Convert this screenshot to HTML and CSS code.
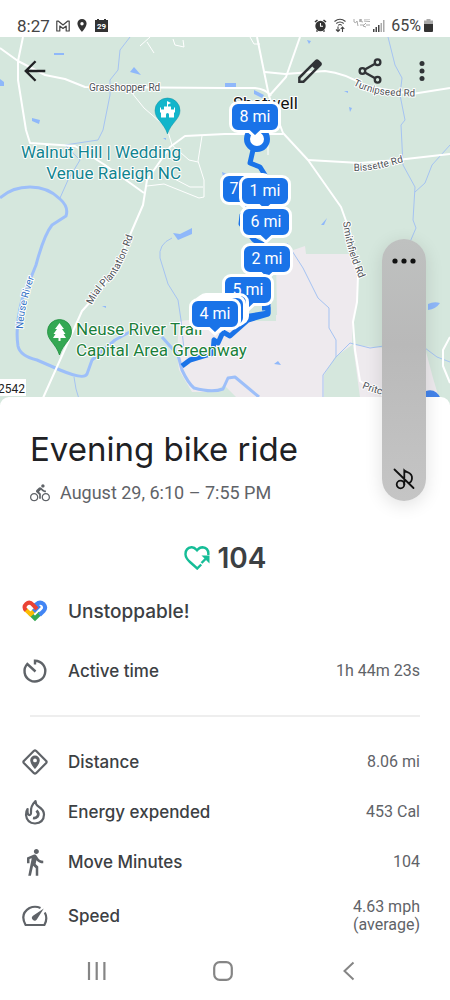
FILE: index.html
```
<!DOCTYPE html>
<html lang="en">
<head>
    <meta charset="UTF-8">
    <meta name="viewport" content="width=device-width, initial-scale=1.0">
    <title>Evening bike ride</title>
    <link rel="stylesheet" href="styles.css">
</head>
<body>

<div class="status-bar">
    <span class="clock">8:27</span>
    <svg class="mail" width="14" height="12" viewBox="0 0 14 12" fill="none" stroke="#444" stroke-width="1.2" stroke-linejoin="round"><path d="M.8 1.2h1.7L7 5l4.500-3.800h1.700v9.800h-3V6L7 8.500 3.800 6v5h-3z"/></svg>
    <svg class="place" width="10" height="13" viewBox="0 0 10 13"><path fill="#333" fill-rule="evenodd" d="M5 0a4.600 4.600 0 0 0-4.600 4.600C.4 8 5 13 5 13s4.600-5 4.600-8.400A4.600 4.600 0 0 0 5 0zm0 3a1.700 1.700 0 1 1 0 3.400A1.700 1.700 0 0 1 5 3z"/></svg>
    <svg class="calendar" width="13" height="13" viewBox="0 0 13 13"><path fill="#333" d="M0 1h2V0h2v1h5V0h2v1h2v12H0z"/><text x="6.500" y="10" text-anchor="middle">29</text></svg>
    <span class="spacer"></span>
    <svg width="13" height="13" viewBox="0 0 13 13"><circle cx="6.500" cy="7" r="5.200" fill="#333"/><path d="M1 3l2.500-2M12 3L9.500 1M2.500 12.500l1-1M10.500 12.500l-1-1" stroke="#333" stroke-width="1.600"/><path d="M6.500 4v3.200H9" fill="none" stroke="#fff" stroke-width="1.100"/></svg>
    <svg class="wifi" width="12" height="15" viewBox="0 0 12 15" fill="none" stroke="#444" stroke-width="1.100"><path d="M.5 3.500q5.500-4.500 11 0M2.300 5.500q3.700-3 7.400 0M4.200 7.300q1.800-1.500 3.600 0"/><path d="M4 8.500v5M2 11.500l2 2 2-2M8.500 14V9M6.700 11l1.800-2 1.800 2"/></svg>
    <svg class="carrier" width="18" height="14" viewBox="0 0 18 14" fill="none" stroke="#aaa" stroke-width="1"><path d="M1 0v3q2 2 3-1l1 5M6 0l3 1-3 1 4 1M7 6h4M11 0h6M11 2l6 .5M13 4l-3 3 3 1M13 6h4"/></svg>
    <svg class="signal" width="12" height="12" viewBox="0 0 12 12"><path fill="#444" d="M0 9h1.500v3H0zM2.500 7H4v5H2.500zM5 5h1.500v7H5z"/><path fill="#aaa" d="M7.500 3H9v9H7.500zM10 0h1.500v12H10z"/></svg>
    <span class="battery-level">65%</span>
    <svg width="9" height="13" viewBox="0 0 9 13"><path fill="#aaa" d="M2.500 0h4v1.500H9V6H0V1.500h2.500z"/><path fill="#333" d="M0 5h9v7a1 1 0 0 1-1 1H1a1 1 0 0 1-1-1z"/></svg>
</div>

<div class="map">
    <svg class="map-canvas" viewBox="0 37 450 368" preserveAspectRatio="xMidYMin slice" role="img" aria-label="Route map">
        <defs>
            <!-- mile marker, tip points at the bottom -->
            <path id="bubble" d="M-17-14.500h34a7.500 7.500 0 0 1 7.500 7.500v14a7.500 7.500 0 0 1-7.500 7.500H6L0 20-6 14.500h-11a7.500 7.500 0 0 1-7.500-7.500v-14a7.500 7.500 0 0 1 7.500-7.500z"/>
            <path id="turnipseed" d="M353 85Q370 94 390 95.500T425 96"/>
            <path id="bissette" d="M354 171Q375 171 400 163L412 160"/>
            <path id="smithfield" d="M343 222Q346 243 350 255T364 290"/>
            <path id="mial" d="M92 305Q98 292 110 281T136 227"/>
            <path id="neuse" d="M23 329Q24 305 35 275L40 262"/>
            <path id="pritchard" d="M362 388Q372 393 400 399"/>
        </defs>

        <rect y="37" width="450" height="368" fill="#d5e7dd"/>
        <path class="town" d="M276 256l29-10 1 8h46l6 21-1 25-4 20-1 25-17 12-11 18v30h-80l-20-20-10 7h-22l-13-22-2-17 2-32 50-5 48-1z"/>
        <path class="town" d="M353 345l32 3 40 0 8 30 8 27h-80z"/>
        <path fill="#d5e7dd" d="M250 297h26v24h-26z"/>

        <g class="stream">
            <path d="M130 37l-10 13-2 20-8 10v15l-7 35-5 10-33 5 15 15-12 20-8 18"/>
            <path d="M172 238q-14 6-12 20l8 26 10 16 3 20 3 30M74 377l2 12 3 10"/>
            <path d="M388 37l7 28 7 13-2 17 5 25-4 5 2 40 12 22-2 33 3 8-6 14M450 145l-18 20-7 18-10 9"/>
            <path d="M287 243l16 25 15 30 11 10v20l7 12v17l-13 18v30M336 357l14-14 20 5 14-2M425 348l12 9 13 5"/>
        </g>
        <path class="river" d="M0 198Q12 187 30 187T60 199Q69 207 66 216L52 225Q44 235 36 265L22 300Q15 327 18 346 20 356 37 360L60 370Q84 380 87 374L92 360 115 340 137 328"/>
        <path class="river" d="M162 337l16 18 4 15q6 13 12 18 18 5 29 1l5-11 7-1 24 20"/>
        <g class="pond">
            <path d="M54 53h10v2H54zM130 72l4-5 7 8zM0 79l4 3v4H0zM32 118l8 2-1 4-7-3zM173 233l7 1 12-6v6l-14 6zM307 40l4 1-2 3zM225 83h11v4h-11zM254 90l10 5-2 3-8-4zM349 107l3 1-2 4zM321 225l6-7-3 7zM222 172l5 2-4 3zM274 364l4-3 3 4zM344 91h4v2zM163 138h3v2zM428 304q6-3 12-1-4 6-12 7zM102 306h4v2z"/>
            <path fill="#4384eb" d="M426 391q10-3 15 8h-15z"/>
        </g>

        <g class="road">
            <path d="M0 48L18 61 45 75 65 79 85 87 225 88H255Q266 89 271 96M23 37L18 61V80L26 130 30 143 75 146 105 165 144 193"/>
            <path d="M43 398L82 311 100 291 117 266 130 235 143 205 147 180 170 147 185 136 225 134H283"/>
            <path d="M257 37l12 59 3 8 11 29 25 27 33 47 9 25 8 43-1 27-4 20 2 28 5 31 25 16M300 37l-14 40-17 19"/>
            <path d="M265 72l20 2 40-3q20 2 40 15l47 8 38-6M308 160l52 3 37-3 53-6M450 337l-7 13v16l7 17"/>
        </g>
        <g class="lane">
            <path d="M132 93l12 15 23 20 5 17 17 15 9 2M202 136l-4 25 6 19v17l-5 1-35-14-17 2M165 174l25 13h13M140 46l20-18M147 42l7 11M173 39l2 6 9 2-1-7M250 37l4 7h6M268 133v22"/>
        </g>

        <g class="road-name">
            <text x="89" y="91">Grasshopper Rd</text>
            <text><textPath href="#turnipseed">Turnipseed Rd</textPath></text>
            <text><textPath href="#bissette">Bissette Rd</textPath></text>
            <text><textPath href="#smithfield">Smithfield Rd</textPath></text>
            <text><textPath href="#mial">Mial Plantation Rd</textPath></text>
            <text class="river-name"><textPath href="#neuse">Neuse River</textPath></text>
            <text><textPath href="#pritchard">Pritc</textPath></text>
        </g>

        <path class="route" d="M253 150L250 163 260 167 265 175 267 192 242 215 241 224 254 240 268 247M262 308H268V314L248 320 230 336 223 332 218 343 214 340 213 353 190 360 182 366"/>
        <path class="route" d="M268 304V313L244 317"/>
        <circle cx="257" cy="139" r="10" fill="#fff" stroke="#1a73e8" stroke-width="6"/>

        <g class="place-name">
            <text class="venue" x="181" y="158" text-anchor="end">Walnut Hill | Wedding</text>
            <text class="venue" x="181" y="179" text-anchor="end">Venue Raleigh NC</text>
            <text class="park" x="76" y="335">Neuse River Trail</text>
            <text class="park" x="76" y="356">Capital Area Greenway</text>
            <text x="233" y="109">Shotwell</text>
        </g>

        <path fill="#12b5cb" stroke="#0e8f9f" stroke-width=".5" d="M167.500 98a12.500 12.500 0 0 0-12.500 12.500c0 9 9 12 12.500 23.500 3.500-11.500 12.500-14.500 12.500-23.500A12.500 12.500 0 0 0 167.500 98z"/>
        <path fill="#fff" d="M167 101l4 2-3 1.500v2h3v3h3v-2h1v5h-1v5h-5v-3a1.500 1.500 0 0 0-3 0v3h-5v-5h-1v-5h1v2h3v-3h3z"/>
        <path fill="#34a853" stroke="#1e8e3e" stroke-width=".8" d="M59.500 319.500a12 12 0 0 0-12 12c0 9 8.500 12 12 23.500 3.500-11.500 12-14.500 12-23.500a12 12 0 0 0-12-12z"/>
        <path fill="#fff" d="M59.500 323l4.500 6h-2l3.500 5h-2l2.500 4h-5.500v3h-2v-3H53l2.500-4h-2l3.500-5h-2z"/>

        <g class="marker" transform="translate(255 117)"><use href="#bubble"/><text y="5">8 mi</text></g>
        <g class="marker" transform="translate(246 189)"><use href="#bubble"/><text x="-12" y="5">7</text></g>
        <g class="marker" transform="translate(265 191)"><use href="#bubble"/><text y="5">1 mi</text></g>
        <g class="marker" transform="translate(266 222)"><use href="#bubble"/><text y="5">6 mi</text></g>
        <g class="marker" transform="translate(267 259)"><use href="#bubble"/><text y="5">2 mi</text></g>
        <g class="marker" transform="translate(248 290)"><use href="#bubble"/><text y="5">5 mi</text></g>
        <g class="marker" transform="translate(223 309)"><use href="#bubble"/></g>
        <g class="marker" transform="translate(220 311)"><use href="#bubble"/></g>
        <g class="marker" transform="translate(215 314)"><use href="#bubble"/><text y="5">4 mi</text></g>

        <path fill="#fff" d="M0 379h26v17H0z"/>
        <text class="route-number" x="-2" y="393">2542</text>
    </svg>

    <div class="toolbar">
        <button type="button" class="icon-button back" aria-label="Back"><svg width="26" height="26" viewBox="0 0 24 24" fill="none" stroke="#202124" stroke-width="2.200"><path d="M21.500 12H4M12.500 3L3.500 12l9 9"/></svg></button>
        <button type="button" class="icon-button" aria-label="Edit"><svg width="30" height="30" viewBox="0 0 24 24"><path fill="#303336" fill-rule="evenodd" d="M2.500 16.800V21.500h4.700L20.900 7.800c.8-.8.800-2 0-2.800l-1.900-1.900c-.8-.8-2-.8-2.800 0zM13.800 8.300l1.900 1.900L6.300 19.500l-1.900.1.100-1.900z"/></svg></button>
        <button type="button" class="icon-button" aria-label="Share"><svg width="28" height="28" viewBox="0 0 24 24" fill="none" stroke="#303336" stroke-width="2"><circle cx="18.500" cy="4.500" r="2.400"/><circle cx="5.500" cy="12" r="2.400"/><circle cx="18.500" cy="19.500" r="2.400"/><path d="M7.600 10.800l8.800-5.100M7.600 13.200l8.800 5.100"/></svg></button>
        <button type="button" class="icon-button more" aria-label="More options"><svg width="24" height="24" viewBox="0 0 24 24" fill="#303336"><circle cx="12" cy="4.500" r="2.500"/><circle cx="12" cy="12" r="2.500"/><circle cx="12" cy="19.500" r="2.500"/></svg></button>
    </div>
</div>

<div class="volume-panel">
    <button type="button" aria-label="Volume options"><svg width="24" height="8" viewBox="0 0 24 8" fill="#111"><circle cx="3" cy="4" r="2.600"/><circle cx="12" cy="4" r="2.600"/><circle cx="21" cy="4" r="2.600"/></svg></button>
    <button type="button" aria-label="Unmute media"><svg width="22" height="22" viewBox="0 0 22 22" fill="none" stroke="#111" stroke-width="1.800" stroke-linecap="round"><circle cx="7.500" cy="16.500" r="3.800"/><path d="M11.300 16.500V2.500q1 1 3.500 1.800 4.500 2 4.200 6-.2 4-3.500 4.800M1.500 1.500l19 18.500"/></svg></button>
</div>

<main class="sheet">
    <h1>Evening bike ride</h1>
    <p class="date">
        <svg width="20" height="20" viewBox="0 0 24 24" fill="#5f6368"><path d="M15.500 5.500c1.100 0 2-.9 2-2s-.9-2-2-2-2 .9-2 2 .9 2 2 2zM5 12c-2.800 0-5 2.200-5 5s2.200 5 5 5 5-2.200 5-5-2.200-5-5-5zm0 8.500c-1.900 0-3.500-1.600-3.500-3.500s1.600-3.500 3.500-3.500 3.500 1.600 3.500 3.500-1.600 3.500-3.500 3.500zm5.800-10l2.400-2.400.8.800c1.300 1.300 3 2.100 5.100 2.100V9c-1.500 0-2.700-.6-3.600-1.500l-1.900-1.900c-.5-.4-1-.6-1.600-.6s-1.100.2-1.400.6L7.800 8.400c-.4.400-.6.900-.6 1.400 0 .6.200 1.100.6 1.400L11 14v5h2v-6.200l-2.200-2.300zM19 12c-2.800 0-5 2.200-5 5s2.200 5 5 5 5-2.200 5-5-2.200-5-5-5zm0 8.500c-1.900 0-3.500-1.600-3.500-3.500s1.600-3.500 3.500-3.500 3.500 1.600 3.500 3.500-1.600 3.500-3.500 3.500z"/></svg>
        August 29, 6:10 – 7:55 PM
    </p>

    <div class="points">
        <svg width="26" height="24" viewBox="0 0 26 24" fill="none" stroke="#15bd97" stroke-width="2.400"><path d="M24.300 9q.7-7-5.800-7.700-3 0-5.500 3Q10 1 7.500 1.300 1.300 2 1.500 8.500 1.700 12 6 16l7.200 6.500 4-4"/><path d="M17.500 17l5-5"/><path fill="#15bd97" stroke="none" d="M17.500 9.500h8V17.500z"/></svg>
        <span>104</span>
    </div>

    <div class="row">
        <svg width="26" height="22" viewBox="0 0 26 22" fill="none" stroke-width="4"><path stroke="#34a853" d="M7.500 13L13 18.500 18.500 13"/><path stroke="#fbbc04" d="M3.500 9.500L8.500 14.300 13 10"/><path stroke="#4285f4" d="M11.500 11.500L17.500 5.500M11.800 6.500L14 4.400Q18 1 21.600 4q3 3.500.2 6.800L17.500 15"/><path stroke="#ea4335" d="M15 9l-4-4.200Q7.500 1 4.200 4T4 10.400"/></svg>
        <span class="label headline">Unstoppable!</span>
    </div>

    <dl class="stats summary">
        <div class="row">
            <svg width="26" height="26" viewBox="0 0 26 26" fill="none" stroke="#5f6368" stroke-width="2.400"><path d="M13 6.500V2.700A10.400 10.400 0 1 1 5.300 6L13.500 13.500"/></svg>
            <dt class="label">Active time</dt>
            <dd>1h 44m 23s</dd>
        </div>
    </dl>

    <dl class="stats">
        <div class="row">
            <svg width="26" height="26" viewBox="0 0 26 26"><path fill="none" stroke="#5f6368" stroke-width="2.200" stroke-linejoin="round" d="M12 1.800q1-.8 2 0L24.200 12q.8 1 0 2L14 24.200q-1 .8-2 0L1.800 14q-.8-1 0-2z"/><path fill="#5f6368" fill-rule="evenodd" d="M13 6.500a4.800 4.800 0 0 0-4.800 4.800c0 3.700 4.800 8.700 4.800 8.700s4.800-5 4.800-8.700A4.800 4.800 0 0 0 13 6.500zm0 3a1.900 1.900 0 1 1 0 3.800 1.900 1.900 0 0 1 0-3.800z"/></svg>
            <dt class="label">Distance</dt>
            <dd>8.06 mi</dd>
        </div>
        <div class="row">
            <svg width="26" height="26" viewBox="0 0 26 26" fill="none" stroke="#5f6368" stroke-width="2.200" stroke-linejoin="round"><path d="M13.500 2q-5 5-4.500 11 .2 3.500-2 3-1.800-.8-1.400-6Q3.800 12.500 4 16q.8 8 9 8.500 8.800-.5 9-9 0-4.500-5.500-8-3-1.800-3-5.500z"/><path stroke-width="2.800" d="M14.500 11.500q3 3 1 6-2 2-4.500 1.500"/></svg>
            <dt class="label">Energy expended</dt>
            <dd>453 Cal</dd>
        </div>
        <div class="row">
            <svg width="26" height="30" viewBox="2 0 20.800 24" fill="#5f6368"><path d="M13.500 5.500c1.100 0 2-.9 2-2s-.9-2-2-2-2 .9-2 2 .9 2 2 2zM9.800 8.900L7 23h2.100l1.800-8 2.100 2v6h2v-7.500l-2.100-2 .6-3C14.800 12 16.800 13 19 13v-2c-1.900 0-3.500-1-4.300-2.400l-1-1.600c-.4-.6-1-1-1.700-1-.3 0-.5.1-.8.1L6 8.300V13h2V9.600l1.800-.7"/></svg>
            <dt class="label">Move Minutes</dt>
            <dd>104</dd>
        </div>
        <div class="row tall">
            <svg width="26" height="22" viewBox="0 0 26 22"><path fill="none" stroke="#5f6368" stroke-width="2.200" stroke-linejoin="round" d="M18.500 3Q13 .500 7.500 3-2.500 9 3.600 20H22.400Q26 13.500 22.800 7.500"/><path fill="#5f6368" d="M21.800 3.500L11 10.800a2.700 2.700 0 1 0 3.800 3.800z"/></svg>
            <dt class="label">Speed</dt>
            <dd>4.63 mph<br>(average)</dd>
        </div>
    </dl>
</main>

<nav class="system-nav">
    <button type="button" aria-label="Recent apps"><svg width="20" height="20" viewBox="0 0 20 20" stroke="#858585" stroke-width="2.200"><path d="M2 1v18M9.700 1v18M17.400 1v18"/></svg></button>
    <button type="button" aria-label="Home"><svg width="20" height="20" viewBox="0 0 20 20" fill="none" stroke="#858585" stroke-width="2.200"><rect x="1.200" y="1.200" width="17.600" height="17.600" rx="5.500"/></svg></button>
    <button type="button" aria-label="Back"><svg width="20" height="20" viewBox="0 0 20 20" fill="none" stroke="#858585" stroke-width="2"><path d="M14.500 1.500L5.500 10l9 8.500"/></svg></button>
</nav>

</body>
</html>
```
FILE: styles.css
```
* {
    box-sizing: border-box;
}

body {
    margin: 0;
    font-family: Roboto, Arial, sans-serif;
    background-color: #fff;
    color: #3c4043;
}

button {
    display: flex;
    align-items: center;
    justify-content: center;
    padding: 0;
    border: none;
    background: none;
    cursor: pointer;
}

h1, p, dl, dd {
    margin: 0;
}

/* Status bar */
.status-bar {
    display: flex;
    align-items: center;
    height: 37px;
    padding: 14px 17px 0 17px;
    font-size: 17px;
    line-height: 22px;
    color: #444;
}

.status-bar .mail {
    margin-left: 6px;
}

.status-bar .place {
    margin-left: 7px;
}

.status-bar .calendar {
    margin-left: 8px;
}

.calendar text {
    font-size: 8px;
    font-weight: bold;
    fill: #fff;
}

.spacer {
    flex: 1;
}

.wifi {
    margin-left: 7px;
}

.carrier {
    margin-left: 7px;
}

.signal {
    margin-left: 2px;
}

.battery-level {
    margin: 0 3px 0 6px;
    font-size: 16px;
}

/* Map */
.map {
    position: relative;
}

.map-canvas {
    display: block;
    width: 100%;
    height: 368px;
}

.town {
    fill: #eeeaee;
}

.stream {
    fill: none;
    stroke: #a5c3f2;
    stroke-width: 1;
}

.river {
    fill: none;
    stroke: #9dbff9;
    stroke-width: 3;
    stroke-linejoin: round;
}

.pond {
    fill: #8fb8fa;
}

.road,
.lane {
    fill: none;
    stroke: #fff;
    stroke-linejoin: round;
}

.road {
    stroke-width: 2;
}

.lane {
    stroke-width: 1;
}

.map-canvas text {
    paint-order: stroke;
    stroke: #fff;
    stroke-width: 2;
    stroke-linejoin: round;
}

.road-name {
    font-size: 10px;
    fill: #4d5156;
}

.river-name {
    fill: #2f6fc4;
}

.place-name {
    font-size: 17px;
    fill: #111;
}

.venue {
    fill: #12848f;
}

.park {
    fill: #1b7f3b;
}

.route {
    fill: none;
    stroke: #1a73e8;
    stroke-width: 5;
    stroke-linejoin: round;
}

.marker {
    fill: #1a73e8;
    stroke: #fff;
    stroke-width: 3;
}

.map-canvas .marker text {
    font-size: 16px;
    text-anchor: middle;
    fill: #fff;
    stroke: none;
}

.map-canvas .route-number {
    font-size: 12px;
    fill: #222;
    stroke: none;
}

.toolbar {
    position: absolute;
    top: 10px;
    left: 11px;
    right: 12px;
    display: flex;
    gap: 12px;
}

.icon-button {
    width: 48px;
    height: 48px;
}

.back {
    margin-right: auto;
}

.more {
    width: 32px;
}

/* Floating volume panel */
.volume-panel {
    position: absolute;
    z-index: 1;
    top: 239px;
    right: 24px;
    display: flex;
    flex-direction: column;
    justify-content: space-between;
    width: 44px;
    height: 262px;
    border-radius: 22px;
    background: linear-gradient(#bfc1c0, #b9b9b9 40%, #c5c5c5);
    box-shadow: 0 4px 18px rgba(0, 0, 0, 0.12);
}

.volume-panel button {
    height: 44px;
}

/* Activity details */
.sheet {
    position: relative;
    margin-top: -8px;
    padding-top: 28px;
    border-radius: 9px 9px 0 0;
    background-color: #fff;
}

h1 {
    padding: 0 30px;
    font-family: Inter, Roboto, sans-serif;
    font-size: 33px;
    font-weight: 400;
    line-height: 48px;
    color: #202124;
}

.date {
    display: flex;
    align-items: center;
    gap: 10px;
    padding: 8px 30px 0;
    font-size: 18px;
    line-height: 24px;
    color: #5f6368;
}

.points {
    display: flex;
    align-items: center;
    justify-content: center;
    gap: 8px;
    margin: 33px 0 8px;
    font-family: Inter, Roboto, sans-serif;
    font-size: 28px;
    font-weight: 600;
    line-height: 40px;
}

.row {
    display: flex;
    align-items: center;
    gap: 20px;
    height: 50px;
    padding: 0 30px 0 22px;
}

.label {
    flex: 1;
    font-family: Inter, Roboto, sans-serif;
    font-size: 17px;
    font-weight: 500;
}

.headline {
    font-size: 19px;
}

.row dd {
    font-size: 16px;
    line-height: 18px;
    color: #5f6368;
}

.tall {
    height: 58px;
}

.summary {
    padding: 10px 0 20px;
}

.summary::after {
    content: "";
    display: block;
    margin: 19px 30px 0;
    border-top: 2px solid #eee;
}

/* System navigation */
.system-nav {
    display: flex;
    justify-content: center;
    gap: 62px;
    padding-right: 4px;
}

.system-nav button {
    width: 64px;
    height: 52px;
}
```
